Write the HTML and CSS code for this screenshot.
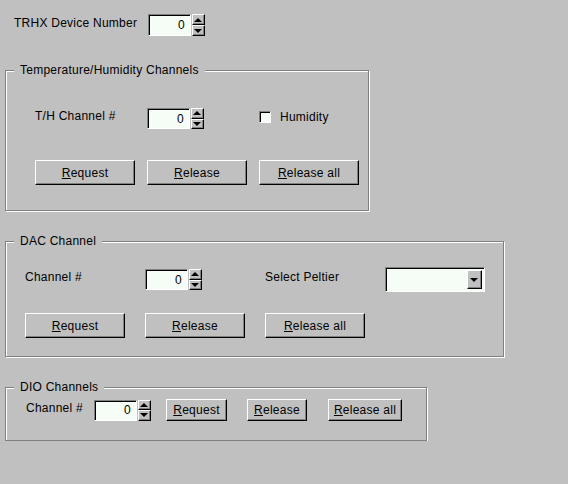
FILE: index.html
```html
<!DOCTYPE html>
<html lang="en">

<head>
  <meta charset="UTF-8">
  <title>TRHX Channels</title>
  <link rel="stylesheet" href="styles.css">
</head>

<body>
  <div class="top-row">
    <span class="label device-label">TRHX Device Number</span>
    <div class="spin tall">
      <div class="field">0</div>
      <div class="spin-btns">
        <div class="spin-btn"><span class="tri-up"></span></div>
        <div class="spin-btn"><span class="tri-down"></span></div>
      </div>
    </div>
  </div>

  <div class="group group-th">
    <span class="group-title">Temperature/Humidity Channels</span>
    <div class="grid grid-th">
      <span class="label">T/H Channel #</span>
      <div class="spin">
        <div class="field">0</div>
        <div class="spin-btns">
          <div class="spin-btn"><span class="tri-up"></span></div>
          <div class="spin-btn"><span class="tri-down"></span></div>
        </div>
      </div>
      <div class="check-row">
        <span class="check"></span>
        <span>Humidity</span>
      </div>
      <button class="button"><u>R</u>equest</button>
      <button class="button"><u>R</u>elease</button>
      <button class="button"><u>R</u>elease all</button>
    </div>
  </div>

  <div class="group group-dac">
    <span class="group-title">DAC Channel</span>
    <div class="grid grid-dac">
      <span class="label">Channel #</span>
      <div class="spin">
        <div class="field">0</div>
        <div class="spin-btns">
          <div class="spin-btn"><span class="tri-up"></span></div>
          <div class="spin-btn"><span class="tri-down"></span></div>
        </div>
      </div>
      <span class="label">Select Peltier</span>
      <div class="combo">
        <div class="combo-btn"><span class="tri-down"></span></div>
      </div>
      <button class="button"><u>R</u>equest</button>
      <button class="button"><u>R</u>elease</button>
      <button class="button"><u>R</u>elease all</button>
    </div>
  </div>

  <div class="group group-dio">
    <span class="group-title">DIO Channels</span>
    <div class="dio-row">
      <span class="label dio-label">Channel #</span>
      <div class="spin">
        <div class="field">0</div>
        <div class="spin-btns">
          <div class="spin-btn"><span class="tri-up"></span></div>
          <div class="spin-btn"><span class="tri-down"></span></div>
        </div>
      </div>
      <button class="button small btn-request"><u>R</u>equest</button>
      <button class="button small btn-release"><u>R</u>elease</button>
      <button class="button small btn-release-all"><u>R</u>elease all</button>
    </div>
  </div>
</body>

</html>
```

FILE: styles.css
```css
body {
  margin: 0;
  background: #c0c0c0;
  font-family: "Liberation Sans", Arial, sans-serif;
  font-size: 12px;
  letter-spacing: 0.25px;
  color: #000;
}

.label {
  padding-bottom: 5px;
  white-space: nowrap;
}

/* top device row */
.top-row {
  display: flex;
  align-items: center;
  padding: 14px 0 0 14px;
}

.device-label {
  width: 134px;
}

/* spin box */
.spin {
  display: flex;
  align-items: stretch;
  height: 21px;
}

.spin.tall {
  height: 22px;
}

.field {
  box-sizing: border-box;
  width: 43px;
  border: 1px solid;
  border-color: #808080 #fff #fff #808080;
  box-shadow: inset 1px 1px 0 #000;
  background: #f6fdf6;
  padding: 0 5px 0 0;
  display: flex;
  align-items: center;
  justify-content: flex-end;
}

.spin-btns {
  display: flex;
  flex-direction: column;
  width: 13px;
  margin-left: 1px;
}

.spin-btn {
  flex: 1;
  box-sizing: border-box;
  border: 1px solid;
  border-color: #fff #000 #000 #fff;
  box-shadow: inset -1px -1px 0 #808080;
  background: #c0c0c0;
  display: flex;
  align-items: center;
  justify-content: center;
}

.tri-up {
  width: 0;
  height: 0;
  border-left: 4px solid transparent;
  border-right: 4px solid transparent;
  border-bottom: 4px solid #000;
  margin-right: 1px;
}

.tri-down {
  width: 0;
  height: 0;
  border-left: 4px solid transparent;
  border-right: 4px solid transparent;
  border-top: 4px solid #000;
  margin-right: 1px;
}

/* buttons */
.button {
  box-sizing: border-box;
  height: 25px;
  padding: 0;
  background: #c0c0c0;
  border: 1px solid;
  border-color: #fff #000 #000 #fff;
  box-shadow: inset -1px -1px 0 #808080;
  font: inherit;
  letter-spacing: inherit;
  color: #000;
  white-space: nowrap;
}

.button.small {
  height: 22px;
}

/* group boxes */
.group {
  position: relative;
  box-sizing: border-box;
  margin-left: 5px;
  border: 1px solid #808080;
  box-shadow: inset 1px 1px 0 #fff, 1px 1px 0 #fff;
}

.group-title {
  position: absolute;
  top: -8px;
  left: 8px;
  padding: 0 6px;
  line-height: 14px;
  background: #c0c0c0;
}

.grid {
  display: grid;
  align-items: center;
}

.group-th {
  margin-top: 34px;
  width: 364px;
  padding: 37px 0 25px 29px;
}

.grid-th {
  grid-template-columns: 100px 100px 100px;
  grid-template-rows: 21px 25px;
  column-gap: 12px;
  row-gap: 31px;
}

.check-row {
  display: flex;
  align-items: center;
  gap: 9px;
  padding-bottom: 3px;
}

.check {
  box-sizing: border-box;
  width: 12px;
  height: 12px;
  border: 1px solid;
  border-color: #808080 #fff #fff #808080;
  box-shadow: inset 1px 1px 0 #000;
  background: #f6fdf6;
}

.group-dac {
  margin-top: 30px;
  width: 499px;
  padding: 25px 0 18px 19px;
}

.grid-dac {
  grid-template-columns: 100px 100px 100px 100px;
  grid-template-rows: 25px 25px;
  column-gap: 20px;
  row-gap: 21px;
}

.combo {
  box-sizing: border-box;
  height: 25px;
  border: 1px solid;
  border-color: #808080 #fff #fff #808080;
  box-shadow: inset 1px 1px 0 #000;
  background: #f6fdf6;
  display: flex;
  align-items: center;
  justify-content: flex-end;
  padding-right: 2px;
}

.combo-btn {
  box-sizing: border-box;
  width: 15px;
  height: 19px;
  border: 1px solid;
  border-color: #fff #000 #000 #fff;
  box-shadow: inset -1px -1px 0 #808080;
  background: #c0c0c0;
  display: flex;
  align-items: center;
  justify-content: center;
}

.group-dio {
  margin-top: 30px;
  width: 422px;
  padding: 11px 0 19px 20px;
}

.dio-row {
  display: flex;
  align-items: center;
}

.dio-label {
  width: 68px;
}

.btn-request {
  width: 61px;
  margin-left: 15px;
}

.btn-release {
  width: 60px;
  margin-left: 20px;
}

.btn-release-all {
  width: 74px;
  margin-left: 21px;
}
```
